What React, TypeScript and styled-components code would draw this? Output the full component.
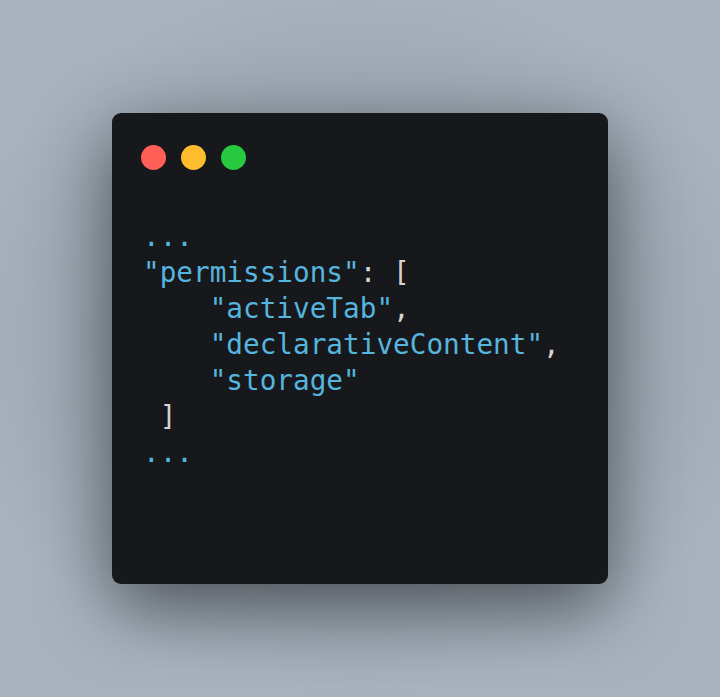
import React from "react";
import styled, { createGlobalStyle } from "styled-components";

const Global = createGlobalStyle`
  html, body { margin: 0; padding: 0; background: #ffffff; }
  #root { width: 720px; }
`;

const Backdrop = styled.div`
  width: 720px;
  height: 697px;
  display: flex;
  align-items: center;
  justify-content: center;
  background: radial-gradient(ellipse 420px 360px at 50% 48%, #8a959f 0%, #99a4ae 55%, #a8b3be 100%);
`;

const Window = styled.div`
  width: 496px;
  height: 471px;
  box-sizing: border-box;
  background: #17181b;
  border-radius: 9px;
  box-shadow: 0 24px 72px rgba(0, 0, 0, 0.52);
  padding: 32px 29px 0 31px;
  display: flex;
  flex-direction: column;
`;

const Controls = styled.div`
  display: flex;
  gap: 15px;
  margin-left: -2px;
`;

const Light = styled.span<{ $color: string }>`
  width: 25px;
  height: 25px;
  border-radius: 50%;
  background: ${(p) => p.$color};
`;

const Code = styled.pre`
  margin: 49px 0 0 0;
  font-family: "DejaVu Sans Mono", monospace;
  font-size: 27.7px;
  line-height: 36px;
  color: #d4d4d4;
  white-space: pre;
`;

const Str = styled.span`
  color: #55b5de;
`;

const Punct = styled.span`
  color: #d4d4d4;
`;

export default function App() {
  return (
    <>
      <Global />
      <Backdrop>
        <Window>
          <Controls>
            <Light $color="#ff5f56" />
            <Light $color="#ffbd2e" />
            <Light $color="#27c93f" />
          </Controls>
          <Code>
            <Str>...</Str>
            {"\n"}
            <Str>"permissions"</Str>
            <Punct>: [</Punct>
            {"\n    "}
            <Str>"activeTab"</Str>
            <Punct>,</Punct>
            {"\n    "}
            <Str>"declarativeContent"</Str>
            <Punct>,</Punct>
            {"\n    "}
            <Str>"storage"</Str>
            {"\n "}
            <Punct>]</Punct>
            {"\n"}
            <Str>...</Str>
          </Code>
        </Window>
      </Backdrop>
    </>
  );
}
